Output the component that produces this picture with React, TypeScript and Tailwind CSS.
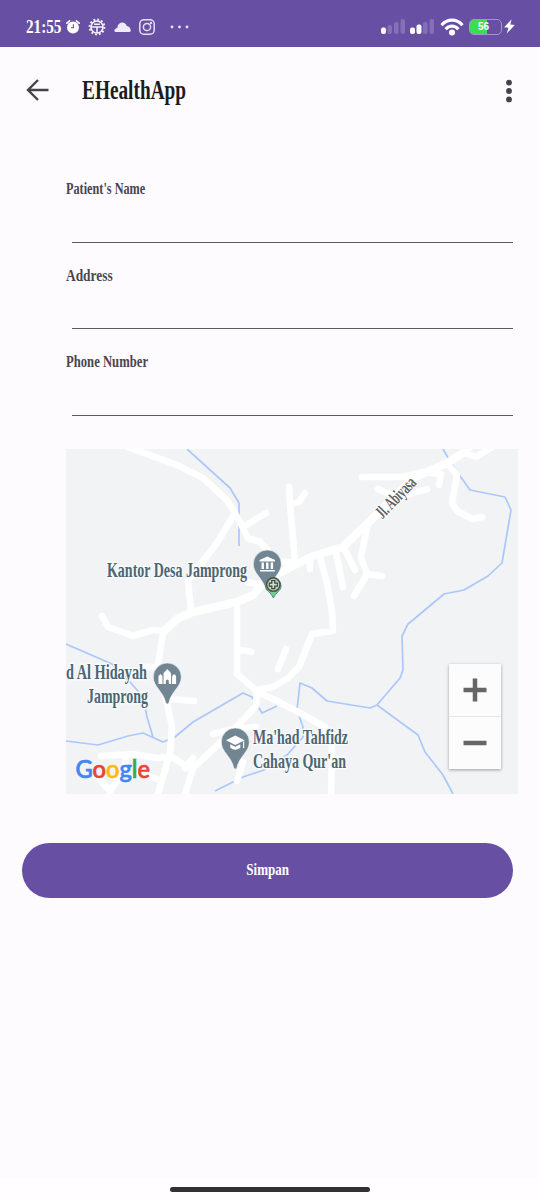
import React from "react";

const serif = "font-['Liberation_Serif',serif] font-bold whitespace-nowrap";

function StatusBar() {
  return (
    <header className="flex h-[47px] shrink-0 items-center bg-[#674fa3] pt-[6px] pl-[26px] pr-[25px] text-white">
      <div className={`${serif} h-6 w-[40px] text-[19px] leading-6`}>
        <span className="inline-block origin-left scale-x-[0.8]">21:55</span>
      </div>
      <svg className="h-[16px] w-[14px]" viewBox="0 0 14 16">
        <circle cx="7" cy="8.4" r="6" fill="#fff" />
        <path d="M.8 4.2 3.6 1.8M13.2 4.2l-2.8-2.4" stroke="#fff" strokeWidth="1.6" strokeLinecap="round" />
        <path d="M7.4 5.2v3.6H5" fill="none" stroke="#674fa3" strokeWidth="1.1" />
      </svg>
      <svg className="ml-[8px] h-[18px] w-[18px]" viewBox="-9 -9 18 18" fill="none" stroke="#f3effa">
        <circle r="7.4" strokeWidth="2" strokeDasharray="1.9 1.975" />
        <circle r="6" strokeWidth="1.6" />
        <path d="M-6 0H6M0 0V6M-3-2.800H3" strokeWidth="1.6" />
      </svg>
      <svg className="ml-[8px] h-[12px] w-[17px]" viewBox="0 0 17 12">
        <path d="M2.500 11C.8 11 .2 10.200.4 9.200.8 7.800 2 7.200 3.300 7 3.600 4 5.500 1.600 8.200 1.600c2.300 0 3.800 1.300 4.600 3.400 2.400.2 3.900 2.300 4 4.600 0 .9-.5 1.400-1.400 1.400Z" fill="#efe9f8" />
      </svg>
      <svg className="ml-[8px] h-[16px] w-[16px]" viewBox="0 0 16 16" fill="none" stroke="#e6def4" strokeWidth="1.5">
        <rect x=".8" y=".8" width="14.4" height="14.4" rx="4" />
        <circle cx="8" cy="8" r="3.600" />
        <circle cx="12" cy="4" r=".5" />
      </svg>
      <svg className="ml-[15px] h-[4px] w-[19px]" viewBox="0 0 19 4" fill="#e9e2f5">
        <circle cx="2" cy="2" r="1.400" /><circle cx="9.500" cy="2" r="1.400" /><circle cx="17" cy="2" r="1.400" />
      </svg>
      <div className="ml-auto flex items-center">
        <svg className="h-[17px] w-[54px]" viewBox="0 0 54 17">
          <g fill="#8370b7">
            <rect x="6.500" y="7" width="4.500" height="9" rx="2" />
            <rect x="13" y="4" width="4.500" height="12" rx="2" />
            <rect x="19.500" y="1" width="4.500" height="15" rx="2" />
            <rect x="42" y="4" width="4.500" height="12" rx="2" />
            <rect x="48.500" y="1" width="4.500" height="15" rx="2" />
          </g>
          <rect x="0" y="9.500" width="5" height="6.500" rx="2" fill="#fff" />
          <rect x="29" y="9.500" width="5" height="6.500" rx="2" fill="#fff" />
          <rect x="35.500" y="6.500" width="5" height="9.500" rx="2" fill="#fff" />
        </svg>
        <svg className="ml-[5px] h-[18px] w-[24px]" viewBox="0 0 24 18" fill="none" stroke="#fff" strokeWidth="3.200">
          <path d="M1.500 7.200C7.500.5 16.500.5 22.500 7.200" />
          <path d="M5.600 11.200c3.600-4 9.200-4 12.800 0" />
          <circle cx="12" cy="14.600" r="3" fill="#fff" stroke="none" />
        </svg>
        <div className="ml-[5px] flex h-[16px] w-[33px] rounded-[5px] border-[1.5px] border-[#a597cb] bg-[linear-gradient(90deg,#3bdd57_0_54%,transparent_54%)] font-['Liberation_Sans',sans-serif] text-[10px] leading-[13px] font-bold">
          <span className="w-[27px] text-center">56</span>
        </div>
        <svg className="ml-[2px] h-[15px] w-[11px]" viewBox="0 0 11 15">
          <path d="M7.600.3.200 8.300l4.300.5L2.700 14.600 10.800 6 6.300 5.600Z" fill="#fff" />
        </svg>
      </div>
    </header>
  );
}

function Field({ children }: { children: React.ReactNode }) {
  return (
    <div className="flex h-[86.6px] flex-col pl-[66px] pr-[27.5px]">
      <label className={`${serif} h-5 text-[17.5px] leading-5 text-[#49454f]`}>{children}</label>
      <div className="mt-[24.900px] ml-[5.5px] h-[20px] border-b-[1.5px] border-[#5f5b64]" />
    </div>
  );
}

function Pin({ x, y }: { x: number; y: number }) {
  return (
    <path
      transform={`translate(${x} ${y})`}
      d="M0-14A14 14 0 0 1 14 0C14 10 4 14 1.500 26Q0 28-1.500 26C-4 14-14 10-14 0A14 14 0 0 1 0-14Z"
      fill="#718692"
      stroke="#f5f7f8"
      strokeWidth=".6"
    />
  );
}

const roads = [
  "M125 446 177 465 203 478 227 500 235 513 243 528 248 538 260 542 268 550",
  "M243 527 266 513",
  "M235 513 217 543 200 565 188 581 191 610",
  "M163 632 177 619 193 612 237 602 253 595 266 580 293 566 313 556 343 547 370 521 413 478 447 463 463 453 470 446",
  "M463 452 476 457 492 447",
  "M362 477H403L423 472 441 474 439 485",
  "M378 489 392 495 405 495 427 489",
  "M447 463 457 475 452 503 457 511 472 519 482 517",
  "M368 523 361 557 367 574 354 596M367 574 382 576",
  "M345 550 355 570M336 553 343 587M310 559V569",
  "M320 557 327 583 332 612 333 631 312 634 299 667 288 678 273 687 257 690",
  "M289 487 290 504 295 562M291 504 299 502 305 493M278 562H293M248 582 263 586",
  "M237 603 237 674 257 691M237 649 251 652M286 649 278 669",
  "M102 616 108 627 133 636 153 630 163 631",
  "M163 632 158 665 167 703 172 727 170 753 157 797M144 667H158M170 699 194 701",
  "M257 690 256 706 240 723 220 743 193 768 184 797",
  "M257 692 273 699 300 713 325 727 332 743 331 797",
  "M213 734 234 729 256 727M192 770 172 757 157 758 132 754 101 756M193 758 185 768",
  "M126 756 124 771 110 791 100 780M140 773 160 780M243 762 237 781",
];

const rivers = [
  "M187 449 230 488 239 503V546",
  "M443 449 451 463 470 490 505 497 511 510 502 563 488 576 464 590 444 594 413 620 408 624 402 636 403 670 400 678 377 705 370 708 327 701 312 688 300 683 297 710 303 727 303 737 287 755 264 770 243 777 215 791",
  "M377 705 418 735 425 752 443 775 453 794",
  "M66 644 112 664 130 682 143 697 147 717 153 737",
  "M66 741 98 745 128 736 143 733 163 742 175 737 193 722 243 693 252 697 262 713 277 706",
];

function MapDrawing() {
  return (
    <svg className="block h-[345px] w-[452px]" viewBox="66 449 452 345" fill="none">
      <rect x="66" y="449" width="452" height="345" fill="#f1f3f5" />
      <path d={rivers.join("")} stroke="#abc8fa" strokeWidth="1.700" strokeLinejoin="round" />
      <path d={roads.join("")} stroke="#fff" strokeWidth="6.600" strokeLinejoin="round" strokeLinecap="round" />
      <path d={roads[3]} stroke="#fff" strokeWidth="8" strokeLinejoin="round" />

      <Pin x={267.300} y={564} />
      <path d="M267.300 556.500 275 560v1.500h-15.400V560ZM261.500 562.500h2.400v6.500h-2.400ZM266.100 562.500h2.400v6.500h-2.400ZM270.700 562.500h2.400v6.500h-2.400ZM260 570h14.800v1.600H260Z" fill="#fff" />
      <path d="M265.800 586a7.600 7.600 0 1 1 15.200 0c0 5-5 6-7.600 12-2.600-6-7.600-7-7.600-12Z" fill="#6fce94" stroke="#5f8570" />
      <circle cx="273.300" cy="584.600" r="6.700" fill="#c3cfb9" stroke="#4a5850" strokeWidth="1.600" />
      <path d="M273.300 580v9.200M268.700 584.600h9.200" stroke="#38473f" strokeWidth="4.200" />
      <path d="M273.300 581.100v7M269.800 584.600h7" stroke="#d0dfcf" strokeWidth="1.700" />

      <Pin x={167.300} y={677} />
      <path d="M158.500 684v-8l2-2 2 2v8ZM172.100 684v-8l2-2 2 2v8ZM163.500 684v-10c0-2 2-2.500 3.800-5 1.800 2.500 3.800 3 3.800 5v10h-2.300v-3a1.500 1.500 0 0 0-3 0v3Z" fill="#fff" />

      <Pin x={235.300} y={742} />
      <path d="M226 740.200 235.300 735.500 244.600 740.200 235.300 745ZM230.300 744.200l5 2.600 5-2.600v3.600q-5 4-10 0ZM243 741.500h1.200v6.500H243Z" fill="#fff" />

      <g fontFamily="'Liberation Serif', serif" fontWeight="700" fontSize="21" fill="#4c6673" stroke="#f9fbfc" strokeWidth="3" paintOrder="stroke" strokeLinejoin="round">
        <text x="107" y="577" textLength="140" lengthAdjust="spacingAndGlyphs">Kantor Desa Jamprong</text>
        <text x="66" y="679" textLength="81" lengthAdjust="spacingAndGlyphs">d Al Hidayah</text>
        <text x="87" y="703" textLength="61" lengthAdjust="spacingAndGlyphs">Jamprong</text>
        <text x="253" y="744" textLength="95" lengthAdjust="spacingAndGlyphs">Ma'had Tahfidz</text>
        <text x="253" y="768" textLength="93" lengthAdjust="spacingAndGlyphs">Cahaya Qur'an</text>
      </g>
      <text x="0" y="0" transform="translate(382.500 519.500) rotate(-46)" fontFamily="'Liberation Serif', serif" fontWeight="700" fontSize="18" fill="#5d6063" stroke="#fff" strokeWidth="2" paintOrder="stroke" textLength="50" lengthAdjust="spacingAndGlyphs">Jl. Abiyasa</text>
      <text x="75.500" y="777.500" fontFamily="Lato, sans-serif" fontWeight="500" fontSize="25" textLength="74.500" lengthAdjust="spacingAndGlyphs" strokeWidth=".7">
        <tspan fill="#4285f4" stroke="#4285f4">G</tspan><tspan fill="#ea4335" stroke="#ea4335">o</tspan><tspan fill="#fbbc05" stroke="#fbbc05">o</tspan><tspan fill="#4285f4" stroke="#4285f4">g</tspan><tspan fill="#34a853" stroke="#34a853">l</tspan><tspan fill="#ea4335" stroke="#ea4335">e</tspan>
      </text>
    </svg>
  );
}

export default function App() {
  return (
    <main className="flex h-[1200px] w-[540px] flex-col overflow-hidden bg-[#fefbff]">
      <StatusBar />
      <div className="flex h-[87px] shrink-0 items-center pl-[26px] pr-[26px]">
        <svg className="h-[22px] w-[23px] -mt-[2px]" viewBox="0 0 23 22" fill="none" stroke="#45424a" strokeWidth="2.400">
          <path d="M22.500 11H2M12 1 2 11 12 21" />
        </svg>
        <h1 className={`${serif} -mt-[2px] ml-[33px] w-[110px] text-[27px] leading-8 text-[#1c1b1f]`}>
          <span className="inline-block origin-left scale-x-[0.715]">EHealthApp</span>
        </h1>
        <svg className="ml-auto h-[24px] w-[10px]" viewBox="0 0 10 24" fill="#45424a">
          <circle cx="5" cy="3.600" r="2.900" /><circle cx="5" cy="12" r="2.900" /><circle cx="5" cy="20.400" r="2.900" />
        </svg>
      </div>
      <form className="flex flex-col pt-[44px]">
        <Field>
          <span className="inline-block origin-left scale-x-[0.7]">Patient's Name</span>
        </Field>
        <Field>
          <span className="inline-block origin-left scale-x-[0.765]">Address</span>
        </Field>
        <Field>
          <span className="inline-block origin-left scale-x-[0.724]">Phone Number</span>
        </Field>
      </form>
      <section className="relative mt-[11.200px] ml-[66px] h-[345px] w-[452px] shrink-0">
        <MapDrawing />
        <div className="absolute top-[215px] left-[383px] flex h-[105px] w-[52px] flex-col bg-[#fcfcfc] shadow-[0_1px_3px_rgba(0,0,0,0.35)]">
          <button className="flex flex-1 items-center justify-center border-b border-[#e4e5e6]">
            <svg className="h-6 w-6" viewBox="0 0 24 24"><path d="M12 .5v23M.5 12h23" stroke="#666" strokeWidth="4.500" /></svg>
          </button>
          <button className="flex flex-1 items-center justify-center">
            <svg className="h-6 w-6" viewBox="0 0 24 24"><path d="M.5 12h23" stroke="#666" strokeWidth="4.500" /></svg>
          </button>
        </div>
      </section>
      <button className={`${serif} mt-[49px] ml-[22px] h-[55px] w-[491px] shrink-0 rounded-full bg-[#674fa3] pb-[2px] text-[17.500px] leading-5 text-white`}>
        <span className="inline-block scale-x-[0.745]">Simpan</span>
      </button>
      <div className="mt-auto flex h-[22px] shrink-0 items-end justify-center bg-[#fffdff] pb-[8px]">
        <div className="h-[5px] w-[200px] rounded-full bg-[#323033]" />
      </div>
    </main>
  );
}
